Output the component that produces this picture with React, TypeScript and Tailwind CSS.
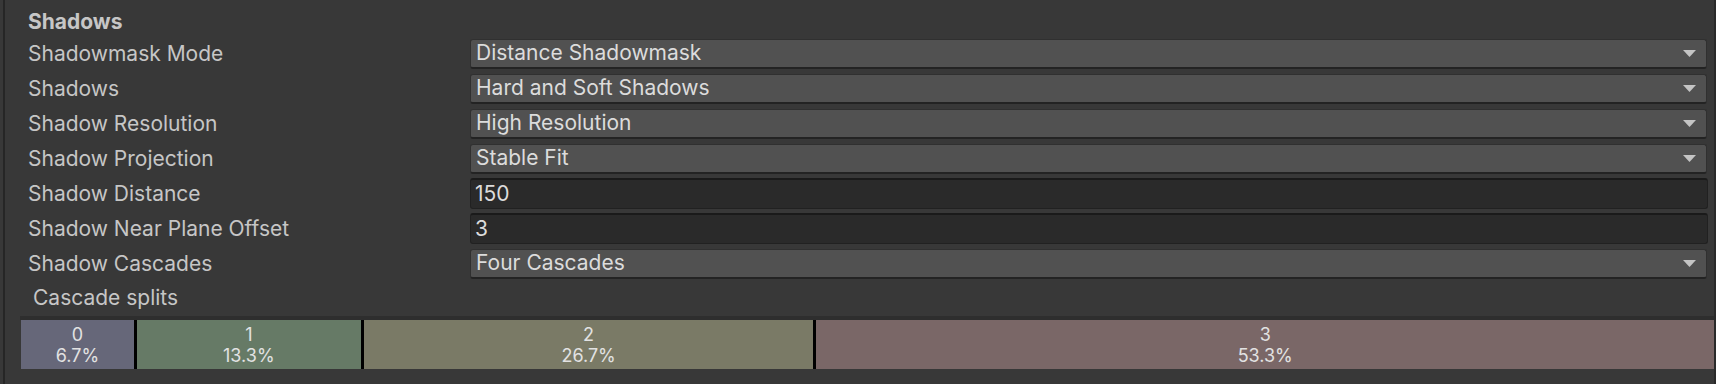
import React from 'react';

// Rows of the Shadows section
const rows = [
  { label: 'Shadowmask Mode', value: 'Distance Shadowmask', kind: 'dropdown' },
  { label: 'Shadows', value: 'Hard and Soft Shadows', kind: 'dropdown' },
  { label: 'Shadow Resolution', value: 'High Resolution', kind: 'dropdown' },
  { label: 'Shadow Projection', value: 'Stable Fit', kind: 'dropdown' },
  { label: 'Shadow Distance', value: '150', kind: 'text' },
  { label: 'Shadow Near Plane Offset', value: '3', kind: 'text' },
  { label: 'Shadow Cascades', value: 'Four Cascades', kind: 'dropdown' },
];

const splits = [
  { id: '0', pct: 6.7, color: 'bg-[#666779]' },
  { id: '1', pct: 13.3, color: 'bg-[#667a66]' },
  { id: '2', pct: 26.7, color: 'bg-[#7a7a66]' },
  { id: '3', pct: 53.3, color: 'bg-[#7a6767]' },
];

const Arrow = () => (
  <svg width="13" height="7" viewBox="0 0 13 7" className="mr-[10px] shrink-0">
    <path d="M0 0 H13 L6.5 7 Z" fill="#c4c4c4" />
  </svg>
);

const Field = ({ value, kind }: { value: string; kind: string }) =>
  kind === 'dropdown' ? (
    <div className="flex h-[30px] w-[1237px] items-center justify-between rounded-[3px] border border-[#303030] border-b-2 border-b-[#232323] bg-[#515151] pl-[5px]">
      <span className="text-[#dcdcdc]">{value}</span>
      <Arrow />
    </div>
  ) : (
    <div className="flex h-[31px] w-[1238px] items-center rounded-[3px] border border-[#212121] border-t-2 border-t-[#1a1a1a] bg-[#2a2a2a] pl-[4px]">
      <span className="text-[#dcdcdc]">{value}</span>
    </div>
  );

export default function App() {
  return (
    <div
      className="flex h-[384px] w-[1716px] bg-[#383838] text-[21px] leading-[24px] text-[#c6c6c6]"
      style={{ fontFamily: 'Inter, "Noto Sans", sans-serif' }}
    >
      <div className="w-[3px]" />
      <div className="w-[2px] bg-[#262626]" />
      <div className="flex w-[1709px] flex-col">
        <div className="h-[36px] pl-[23px] pt-[10px] font-bold">Shadows</div>
        {rows.map((row) => (
          <div key={row.label} className="flex h-[35px] items-center pl-[23px]">
            <div className="w-[442px] shrink-0">{row.label}</div>
            <Field value={row.value} kind={row.kind} />
          </div>
        ))}
        <div className="mt-[5px] h-[24px] pl-[28px]">Cascade splits</div>
        <div className="ml-[15px] mt-[6px] border-t-4 border-[#2e2e2e] pl-[1px]">
          <div className="flex h-[49px] gap-[3px] bg-black">
            {splits.map((s) => (
              <div
                key={s.id}
                className={`flex flex-col items-center justify-center text-[18px] leading-[21px] text-[#e2e2e2] ${s.color}`}
                style={{ flexGrow: s.pct, flexBasis: 0 }}
              >
                <span>{s.id}</span>
                <span>{s.pct}%</span>
              </div>
            ))}
          </div>
        </div>
      </div>
      <div className="w-[2px] bg-[#2a2a2a]" />
    </div>
  );
}
